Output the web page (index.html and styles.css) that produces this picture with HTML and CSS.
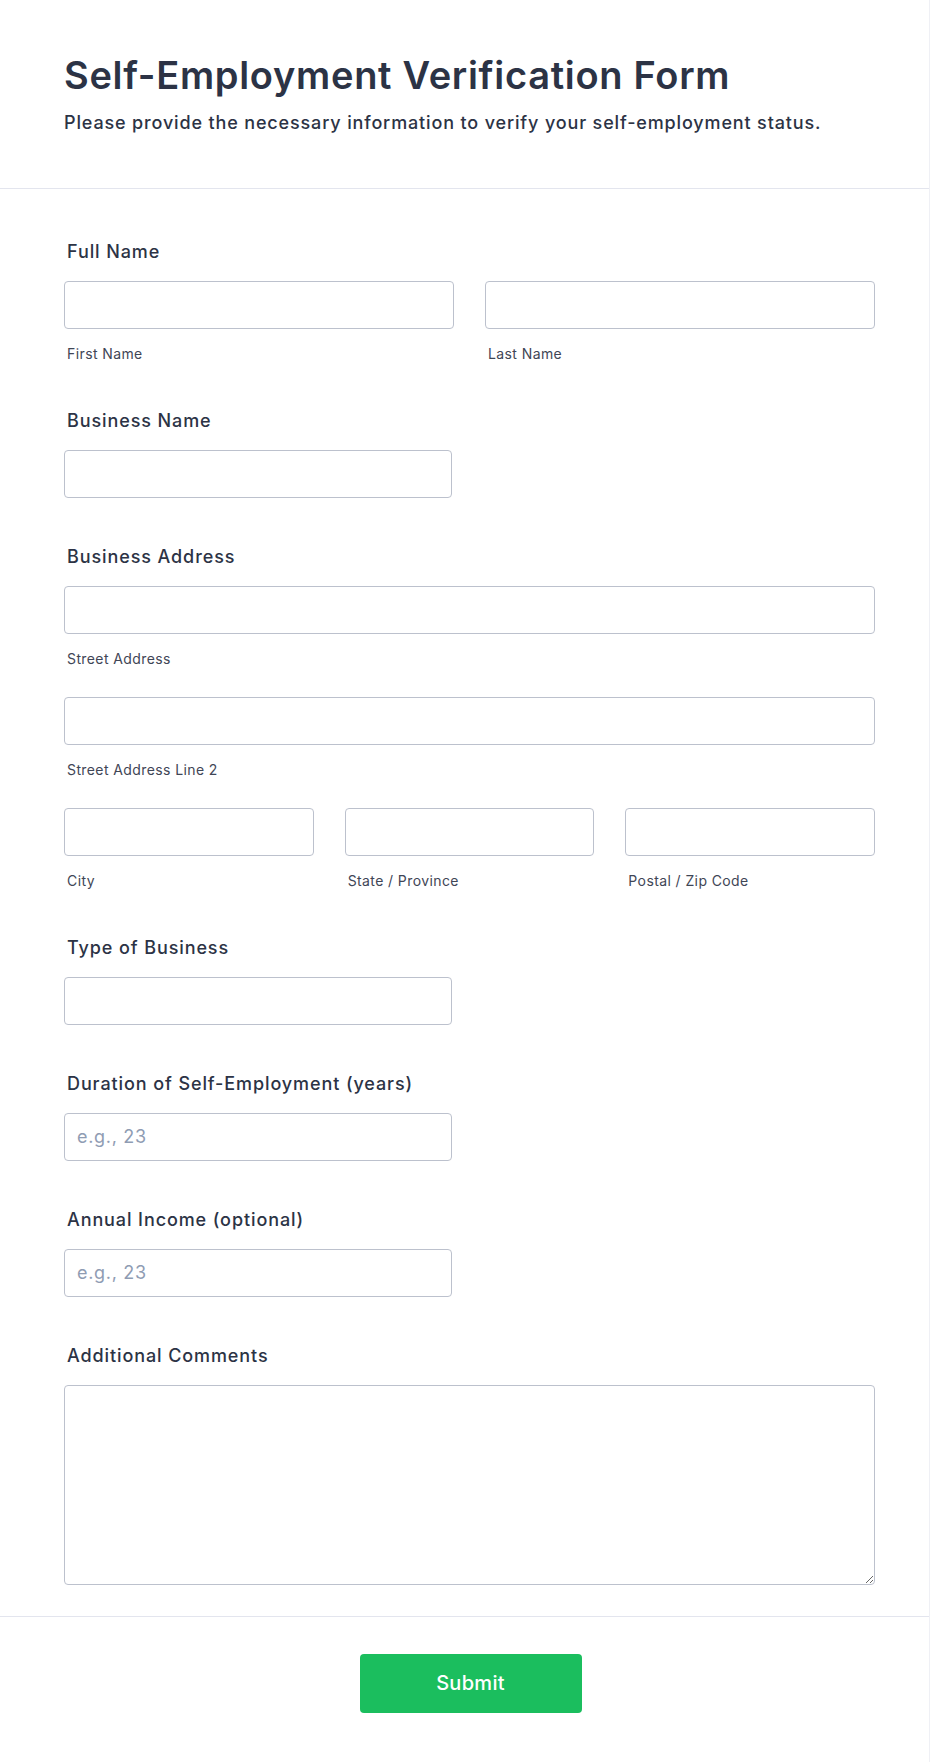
FILE: index.html
```html
<!DOCTYPE html>
<html lang="en">
<head>
  <meta charset="UTF-8">
  <meta name="viewport" content="width=device-width, initial-scale=1.0">
  <title>Self-Employment Verification Form</title>
  <link rel="stylesheet" href="styles.css">
</head>
<body>
  <div class="page">
    <!-- Cabecera -->
    <header class="form-header">
      <h1>Self-Employment Verification Form</h1>
      <p>Please provide the necessary information to verify your self-employment status.</p>
    </header>

    <form class="form-body" id="verifyForm">
      <div class="field">
        <label class="field-label">Full Name</label>
        <div class="cols cols-2">
          <div class="sub">
            <input type="text" id="first">
            <label class="sublabel" for="first">First Name</label>
          </div>
          <div class="sub">
            <input type="text" id="last">
            <label class="sublabel" for="last">Last Name</label>
          </div>
        </div>
      </div>

      <div class="field">
        <label class="field-label" for="business">Business Name</label>
        <input type="text" id="business" class="half">
      </div>

      <div class="field">
        <label class="field-label">Business Address</label>
        <div class="sub addr-row">
          <input type="text" id="street">
          <label class="sublabel" for="street">Street Address</label>
        </div>
        <div class="sub addr-row">
          <input type="text" id="street2">
          <label class="sublabel" for="street2">Street Address Line 2</label>
        </div>
        <div class="cols cols-3">
          <div class="sub">
            <input type="text" id="city">
            <label class="sublabel" for="city">City</label>
          </div>
          <div class="sub">
            <input type="text" id="state">
            <label class="sublabel" for="state">State / Province</label>
          </div>
          <div class="sub">
            <input type="text" id="zip">
            <label class="sublabel" for="zip">Postal / Zip Code</label>
          </div>
        </div>
      </div>

      <div class="field">
        <label class="field-label" for="type">Type of Business</label>
        <input type="text" id="type" class="half">
      </div>

      <div class="field">
        <label class="field-label" for="duration">Duration of Self-Employment (years)</label>
        <input type="text" id="duration" class="half" placeholder="e.g., 23">
      </div>

      <div class="field">
        <label class="field-label" for="income">Annual Income (optional)</label>
        <input type="text" id="income" class="half" placeholder="e.g., 23">
      </div>

      <div class="field">
        <label class="field-label" for="comments">Additional Comments</label>
        <textarea id="comments"></textarea>
      </div>
    </form>

    <div class="form-footer">
      <button type="submit" form="verifyForm" class="btn-submit">Submit</button>
    </div>
  </div>
</body>
</html>
```

FILE: styles.css
```css
* {
  box-sizing: border-box;
}
body {
  margin: 0;
  font-family: Inter, "Noto Sans", sans-serif;
  color: #2c3345;
  background: #fff;
}
.page {
  width: 930px;
  border-right: 1px solid #eff0f5;
}
.form-header {
  padding: 53px 54px 52px 64px;
  border-bottom: 1px solid #e3e5ee;
}
.form-header h1 {
  margin: 0;
  font-size: 38px;
  font-weight: 600;
  line-height: 1.2;
  letter-spacing: 0.7px;
}
.form-header p {
  margin: 10px 0 0;
  font-size: 18px;
  font-weight: 500;
  line-height: 27px;
  letter-spacing: 0.85px;
}
.form-body {
  padding: 49px 54px 31px 64px;
}
.field {
  margin-bottom: 45px;
}
.field:last-child {
  margin-bottom: 0;
}
.field-label {
  display: block;
  padding-left: 3px;
  margin-bottom: 16px;
  font-size: 18px;
  font-weight: 500;
  line-height: 27px;
  letter-spacing: 0.9px;
}
input,
textarea {
  display: block;
  width: 100%;
  height: 48px;
  padding: 0 12px;
  border: 1px solid #bcc1cd;
  border-radius: 4px;
  font-family: inherit;
  font-size: 18px;
  letter-spacing: 0.7px;
  color: #2c3345;
  background: #fff;
}
input::placeholder {
  color: #8f9cb3;
}
input.half {
  width: 388px;
}
textarea {
  height: 200px;
  padding: 10px 12px;
}
.cols {
  display: grid;
  column-gap: 31px;
}
.cols-2 {
  grid-template-columns: 1fr 1fr;
}
.cols-3 {
  grid-template-columns: 1fr 1fr 1fr;
}
.sublabel {
  display: block;
  margin-top: 17px;
  padding-left: 3px;
  font-size: 14px;
  line-height: 16px;
  letter-spacing: 0.4px;
  color: #3f4656;
}
.addr-row {
  margin-bottom: 30px;
}
.form-footer {
  border-top: 1px solid #e3e5ee;
  padding: 37px 52px 49px 64px;
  text-align: center;
}
.btn-submit {
  width: 222px;
  height: 59px;
  border: none;
  border-radius: 4px;
  background-color: #1bbe5e;
  color: #fff;
  font-family: inherit;
  font-size: 20px;
  font-weight: 500;
  letter-spacing: 0.3px;
  cursor: pointer;
}
```
